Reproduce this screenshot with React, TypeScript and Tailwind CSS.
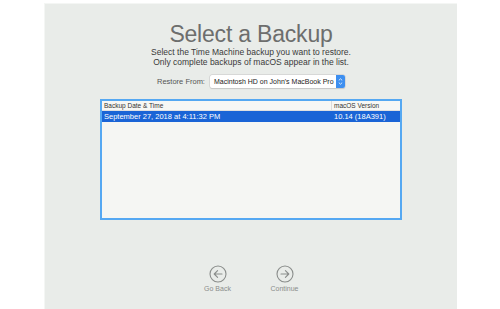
import React from 'react';

const CircleArrow = ({ dir }: { dir: 'left' | 'right' }) => (
  <svg width="18" height="18" viewBox="0 0 18 18" fill="none" stroke="#8a8d8b" strokeWidth="1.1" strokeLinecap="round" strokeLinejoin="round">
    <circle cx="9" cy="9" r="8" />
    {dir === 'left' ? (
      <path d="M13 9H5.2M8.6 5.6L5.2 9l3.4 3.4" />
    ) : (
      <path d="M5 9h7.8M9.4 5.6L12.8 9l-3.4 3.4" />
    )}
  </svg>
);

export default function App() {
  return (
    <div className="w-[500px] h-[309px] bg-white overflow-hidden" style={{ fontFamily: '"Liberation Sans", Arial, sans-serif' }}>
      <div className="ml-[44px] mt-[3px] w-[413px] h-[306px] bg-[#e9ece9] border-l border-t border-[#f4f6f4] flex flex-col items-center">
        <h1 className="mt-[17px] text-[23px] leading-[26px] text-[#6d6e6d] tracking-[-0.2px]">Select a Backup</h1>
        <p className="mt-[1px] text-[8.5px] leading-[9.5px] text-[#3a3a3a] text-center">
          Select the Time Machine backup you want to restore.
          <br />
          Only complete backups of macOS appear in the list.
        </p>

        <div className="mt-[8px] flex items-center gap-[5px]">
          <span className="text-[7.5px] text-[#555]">Restore From:</span>
          <div className="w-[135px] h-[13px] bg-white rounded-[2px] shadow-[0_0_0_0.5px_#c8c8c8,0_0.5px_1px_rgba(0,0,0,0.15)] flex items-center">
            <span className="flex-1 pl-[4px] text-[7px] text-[#222] leading-none whitespace-nowrap">Macintosh HD on John's MacBook Pro</span>
            <div className="w-[9px] h-[13px] rounded-r-[2px] bg-[#3d8ff0] flex flex-col items-center justify-center gap-[1px]">
              <svg width="5" height="3" viewBox="0 0 5 3"><path d="M0.8 2.4L2.5 0.8 4.2 2.4" stroke="white" strokeWidth="0.8" fill="none" /></svg>
              <svg width="5" height="3" viewBox="0 0 5 3"><path d="M0.8 0.6L2.5 2.2 4.2 0.6" stroke="white" strokeWidth="0.8" fill="none" /></svg>
            </div>
          </div>
        </div>

        <div className="mt-[11px] w-[302px] h-[121px] border-2 border-[#55a8f2] bg-[#f5f6f3] flex flex-col">
          <div className="h-[10px] flex text-[6.5px] text-[#333] border-b border-[#e0e0e0] bg-[#f7f7f5]">
            <div className="w-[230px] pl-[2px] border-r border-[#dcdcdc] flex items-center">Backup Date &amp; Time</div>
            <div className="flex-1 pl-[2px] flex items-center">macOS Version</div>
          </div>
          <div className="h-[11px] flex bg-[#1a64d6] text-white text-[7.5px]">
            <div className="w-[230px] pl-[2px] flex items-center">September 27, 2018 at 4:11:32 PM</div>
            <div className="flex-1 pl-[2px] flex items-center">10.14 (18A391)</div>
          </div>
        </div>

        <div className="mt-[45px] flex gap-[41px]">
          <div className="flex flex-col items-center w-[26px]">
            <CircleArrow dir="left" />
            <span className="mt-[1px] text-[7px] text-[#8a8d8b] whitespace-nowrap">Go Back</span>
          </div>
          <div className="flex flex-col items-center w-[26px]">
            <CircleArrow dir="right" />
            <span className="mt-[1px] text-[7px] text-[#8a8d8b] whitespace-nowrap">Continue</span>
          </div>
        </div>
      </div>
    </div>
  );
}
